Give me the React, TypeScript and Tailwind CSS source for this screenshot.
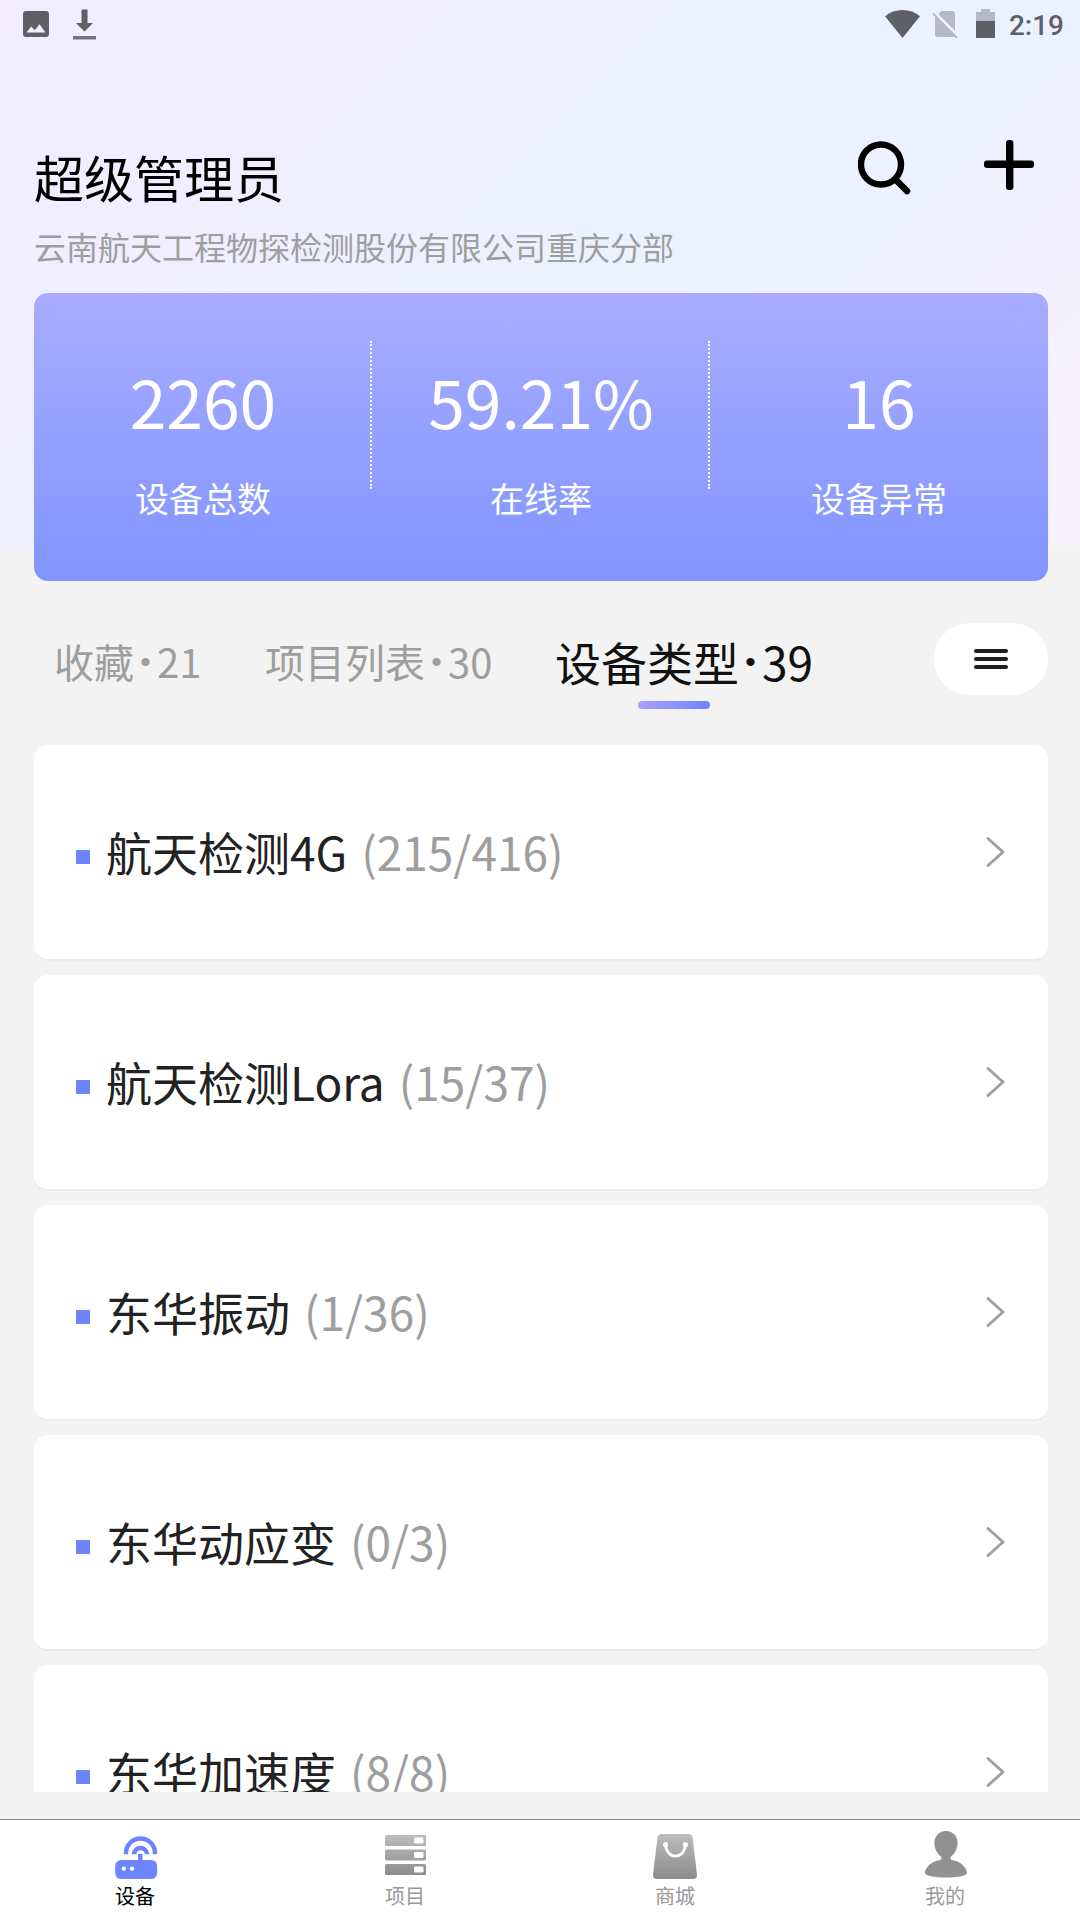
import React from "react";

const stats = [
  { value: "2260", label: "设备总数" },
  { value: "59.21%", label: "在线率" },
  { value: "16", label: "设备异常" },
];

const devices = [
  { name: "航天检测4G", count: "(215/416)" },
  { name: "航天检测Lora", count: "(15/37)" },
  { name: "东华振动", count: "(1/36)" },
  { name: "东华动应变", count: "(0/3)" },
  { name: "东华加速度", count: "(8/8)" },
];

function StatusBar() {
  return (
    <div className="flex h-12 items-start justify-between pl-[23px] pr-[16px] text-[#5f5f66]">
      <div className="flex">
        <svg className="mt-[11px] h-[26px] w-[26px]" viewBox="0 0 26 26">
          <path
            fillRule="evenodd"
            fill="currentColor"
            d="M3 0H23a3 3 0 0 1 3 3V23a3 3 0 0 1-3 3H3a3 3 0 0 1-3-3V3a3 3 0 0 1 3-3ZM3.5 21.5H22.5L16.5 13.3L11.7 19.2L8.2 15.6Z"
          />
        </svg>
        <svg className="ml-6 mt-[9px] h-[31px] w-[23px]" viewBox="0 0 23 31">
          <path fill="currentColor" d="M8.5 0.5H14.5V14H20L11.5 22.5L3 14H8.5Z" />
          <path fill="currentColor" opacity=".85" d="M0 27H23V30.5H0Z" />
        </svg>
      </div>
      <div className="flex">
        <svg className="mt-[10px] h-7 w-[35px]" viewBox="0 0 35 28">
          <path fill="currentColor" d="M17.5 28L0 6.2C5 2 11 0 17.5 0S30 2 35 6.2Z" />
        </svg>
        <svg className="ml-3 mt-[11px] h-7 w-[26px]" viewBox="0 0 26 28">
          <g fill="#b6b8c6">
            <path d="M9.5 0H20a3 3 0 0 1 3 3V19.8L6.5 3.2Z" />
            <path d="M3 5.8L23 25.6Q22.2 26 20.5 26H6a3 3 0 0 1-3-3Z" />
          </g>
          <path d="M1 2.5L25 26.8" stroke="#b6b8c6" strokeWidth="2.2" />
          <path d="M3.2 2L25.6 24.6" stroke="#edf1fe" strokeWidth="1.6" />
        </svg>
        <svg className="ml-[18px] mt-[9px] h-[29px] w-[19px]" viewBox="0 0 19 29">
          <path fill="#b6b8c6" d="M5 0H14V3H19V12H0V3H5Z" />
          <path fill="currentColor" d="M0 12H19V29H0Z" />
        </svg>
        <span className="ml-[14px] mt-[9px] font-[Roboto] text-[28px] font-medium leading-[33px]">2:19</span>
      </div>
    </div>
  );
}

function Header() {
  return (
    <div className="flex h-[245px] justify-between pl-[34px] pr-[46px]">
      <div className="flex flex-col">
        <h1 className="mt-[98px] whitespace-nowrap text-[50px] leading-[60px] text-black">超级管理员</h1>
        <p className="mt-[20px] whitespace-nowrap text-[32px] leading-10 text-[#9e9e9e]">
          云南航天工程物探检测股份有限公司重庆分部
        </p>
      </div>
      <div className="flex">
        <svg className="mt-[93px] h-[54px] w-[54px]" viewBox="0 0 54 54" fill="none" stroke="#000">
          <circle cx="23" cy="23.5" r="20" strokeWidth="6.4" />
          <path d="M38 39L49 50" strokeWidth="6.6" strokeLinecap="round" />
        </svg>
        <svg className="ml-[72px] mt-[92px] h-[50px] w-[50px]" viewBox="0 0 50 50" fill="#000">
          <rect x="0" y="20.5" width="50" height="7.4" rx="3" />
          <rect x="22" y="0" width="7.4" height="50" rx="3" />
        </svg>
      </div>
    </div>
  );
}

function StatsCard() {
  return (
    <div className="ml-[34px] mr-[32px] grid h-72 grid-cols-3 rounded-[14px] bg-linear-to-b from-[#a9acff] to-[#8095ff] pt-12 text-white">
      {stats.map((s, i) => (
        <div
          key={s.label}
          className={
            i < 2
              ? "flex h-[148px] flex-col items-center border-r-2 border-dotted border-white pl-0.5"
              : "flex h-[148px] flex-col items-center"
          }
        >
          <span className="mt-[19px] text-[66px] leading-[80px]">{s.value}</span>
          <span className="mt-[38px] whitespace-nowrap text-[34px] leading-10">{s.label}</span>
        </div>
      ))}
    </div>
  );
}

function Dot({ raised = false }: { raised?: boolean }) {
  return (
    <span
      className={
        raised
          ? "inline-block w-[23px] text-center align-[9px] font-['Liberation_Sans'] text-[30px] leading-none"
          : "inline-block w-[23px] text-center align-[6px] font-['Liberation_Sans'] text-[30px] leading-none"
      }
    >
      •
    </span>
  );
}

function Tabs() {
  return (
    <div className="flex h-[164px] items-start pl-[54px] pr-[32px] pt-[42px]">
      <span className="mt-[13px] w-[211px] shrink-0 whitespace-nowrap text-[40px] leading-[50px] text-[#9e9e9e]">
        收藏<Dot />21
      </span>
      <span className="mt-[13px] w-[290px] shrink-0 whitespace-nowrap text-[40px] leading-[50px] text-[#9e9e9e]">
        项目列表<Dot />30
      </span>
      <div className="flex flex-col">
        <span className="mt-[8px] whitespace-nowrap text-[46px] leading-[60px] text-[#111]">
          设备类型<Dot raised />39
        </span>
        <span className="ml-[83px] mt-[10px] h-2 w-[72px] rounded-full bg-linear-to-r from-[#ab9eff] to-[#6c85ff]" />
      </div>
      <button className="ml-auto flex h-[72px] w-[114px] flex-col items-center justify-center gap-1 rounded-full bg-white">
        <span className="h-1 w-[34px] rounded-full bg-[#1f1f1f]" />
        <span className="h-1 w-[34px] rounded-full bg-[#1f1f1f]" />
        <span className="h-1 w-[34px] rounded-full bg-[#1f1f1f]" />
      </button>
    </div>
  );
}

function DeviceList() {
  return (
    <div className="ml-[34px] mr-[32px] flex h-[1047px] flex-col gap-[14px] overflow-hidden">
      {devices.map((d) => (
        <div
          key={d.name}
          className="flex h-[216px] shrink-0 items-start rounded-[14px] border-b-2 border-[#ebebf0] bg-white pl-[42px] pr-[43px]"
        >
          <span className="mt-[105px] h-[14px] w-[14px] bg-[#6c85ff]" />
          <span className="ml-4 mt-[76px] whitespace-nowrap text-[46px] leading-[60px] text-[#222]">{d.name}</span>
          <span className="ml-[14px] mt-[76px] whitespace-nowrap text-[46px] leading-[60px] text-[#9e9e9e]">{d.count}</span>
          <svg className="ml-auto mt-[91px] h-8 w-5" viewBox="0 0 20 32" fill="none" stroke="#a0a0a0" strokeWidth="3">
            <path d="M3 2.5L18 16L3 29.5" strokeLinecap="round" strokeLinejoin="round" />
          </svg>
        </div>
      ))}
    </div>
  );
}

function RouterIcon() {
  return (
    <svg className="h-[50px] w-[44px]" viewBox="-1 -1 44 50">
      <rect x="1.2" y="26" width="42" height="19" rx="6" fill="#6c85ff" />
      <circle cx="9.8" cy="34.6" r="2.2" fill="#fff" />
      <circle cx="18" cy="34.6" r="2.2" fill="#fff" />
      <path d="M26.3 20V27" stroke="#6c85ff" strokeWidth="4.4" />
      <path d="M12 20.3V19A14.3 14.3 0 0 1 41 19V20.3" fill="none" stroke="#6c85ff" strokeWidth="4.4" />
      <path d="M20 20.3A6.5 6.3 0 0 1 33 20.3" fill="none" stroke="#6c85ff" strokeWidth="4.4" />
    </svg>
  );
}

function ServerIcon() {
  return (
    <svg className="h-[50px] w-[44px]" viewBox="0 0 44 50">
      <defs>
        <linearGradient id="server" x1="0" y1="2" x2="0" y2="42" gradientUnits="userSpaceOnUse">
          <stop stopColor="#bdbdbd" />
          <stop offset="1" stopColor="#8c8c8c" />
        </linearGradient>
      </defs>
      {[2, 16.4, 31].map((y) => (
        <g key={y}>
          <rect x="2" y={y} width="41" height="11" rx="1.5" fill="url(#server)" />
          <rect x="31" y={y + 2.5} width="9.5" height="6" rx="1.2" fill="#fff" />
        </g>
      ))}
    </svg>
  );
}

function BagIcon() {
  return (
    <svg className="h-[50px] w-[44px]" viewBox="0 0 44 50">
      <defs>
        <linearGradient id="bag" x1="0" y1="0" x2="0" y2="46" gradientUnits="userSpaceOnUse">
          <stop stopColor="#bdbdbd" />
          <stop offset="1" stopColor="#8c8c8c" />
        </linearGradient>
      </defs>
      <path
        d="M8.5 1H35.5Q39 1 39.5 4.5L44 41.5Q44.2 46 40 46H4Q-.2 46 0 41.5L4.5 4.5Q5 1 8.5 1Z"
        fill="url(#bag)"
      />
      <circle cx="12.6" cy="11.6" r="2.6" fill="#fff" />
      <circle cx="32.4" cy="11.6" r="2.6" fill="#fff" />
      <path d="M12.6 11.6C13.5 27 31.5 27 32.4 11.6" fill="none" stroke="#fff" strokeWidth="2.6" />
    </svg>
  );
}

function UserIcon() {
  return (
    <svg className="h-[50px] w-[44px]" viewBox="0 0 44 50">
      <path
        fill="#919191"
        d="M23 -2C30 -2 34.6 3 34.6 10C34.6 16 31.5 21 27.6 24C27 26 28 27 30 27.2C38 28.5 44 35 44 40C44 43 33 44.5 23 44.5S2 43 2 40C2 35 8 28.5 16 27.2C18 27 19 26 18.4 24C14.5 21 11.4 16 11.4 10C11.4 3 16 -2 23 -2Z"
      />
    </svg>
  );
}

function BottomNav() {
  const items = [
    { label: "设备", icon: <RouterIcon />, active: true },
    { label: "项目", icon: <ServerIcon />, active: false },
    { label: "商城", icon: <BagIcon />, active: false },
    { label: "我的", icon: <UserIcon />, active: false },
  ];
  return (
    <nav className="grid h-[101px] grid-cols-4 border-t border-[#8a8a8a] bg-white">
      {items.map((item) => (
        <div key={item.label} className="flex flex-col items-center pt-[13px] [&_svg]:overflow-visible">
          {item.icon}
          <span
            className={
              item.active ? "mt-px text-[20px] leading-6 text-black" : "mt-px text-[20px] leading-6 text-[#999]"
            }
          >
            {item.label}
          </span>
        </div>
      ))}
    </nav>
  );
}

export default function App() {
  return (
    <div
      lang="zh-CN"
      className="flex h-[1920px] w-[1080px] flex-col overflow-hidden bg-[#f3f3f3] font-['Noto_Sans_CJK_SC',sans-serif]"
    >
      <div className="h-[546px] shrink-0 bg-[linear-gradient(135deg,#f2eeff_0%,#f0eeff_25%,#edf0ff_42%,#ebf2ff_63%,#f1f0ff_77%,#f7f2ff_92%,#f8f2ff_100%)]">
        <StatusBar />
        <Header />
        <StatsCard />
      </div>
      <div className="mt-[35px] shrink-0">
        <Tabs />
        <DeviceList />
      </div>
      <div className="mt-auto shrink-0">
        <BottomNav />
      </div>
    </div>
  );
}
